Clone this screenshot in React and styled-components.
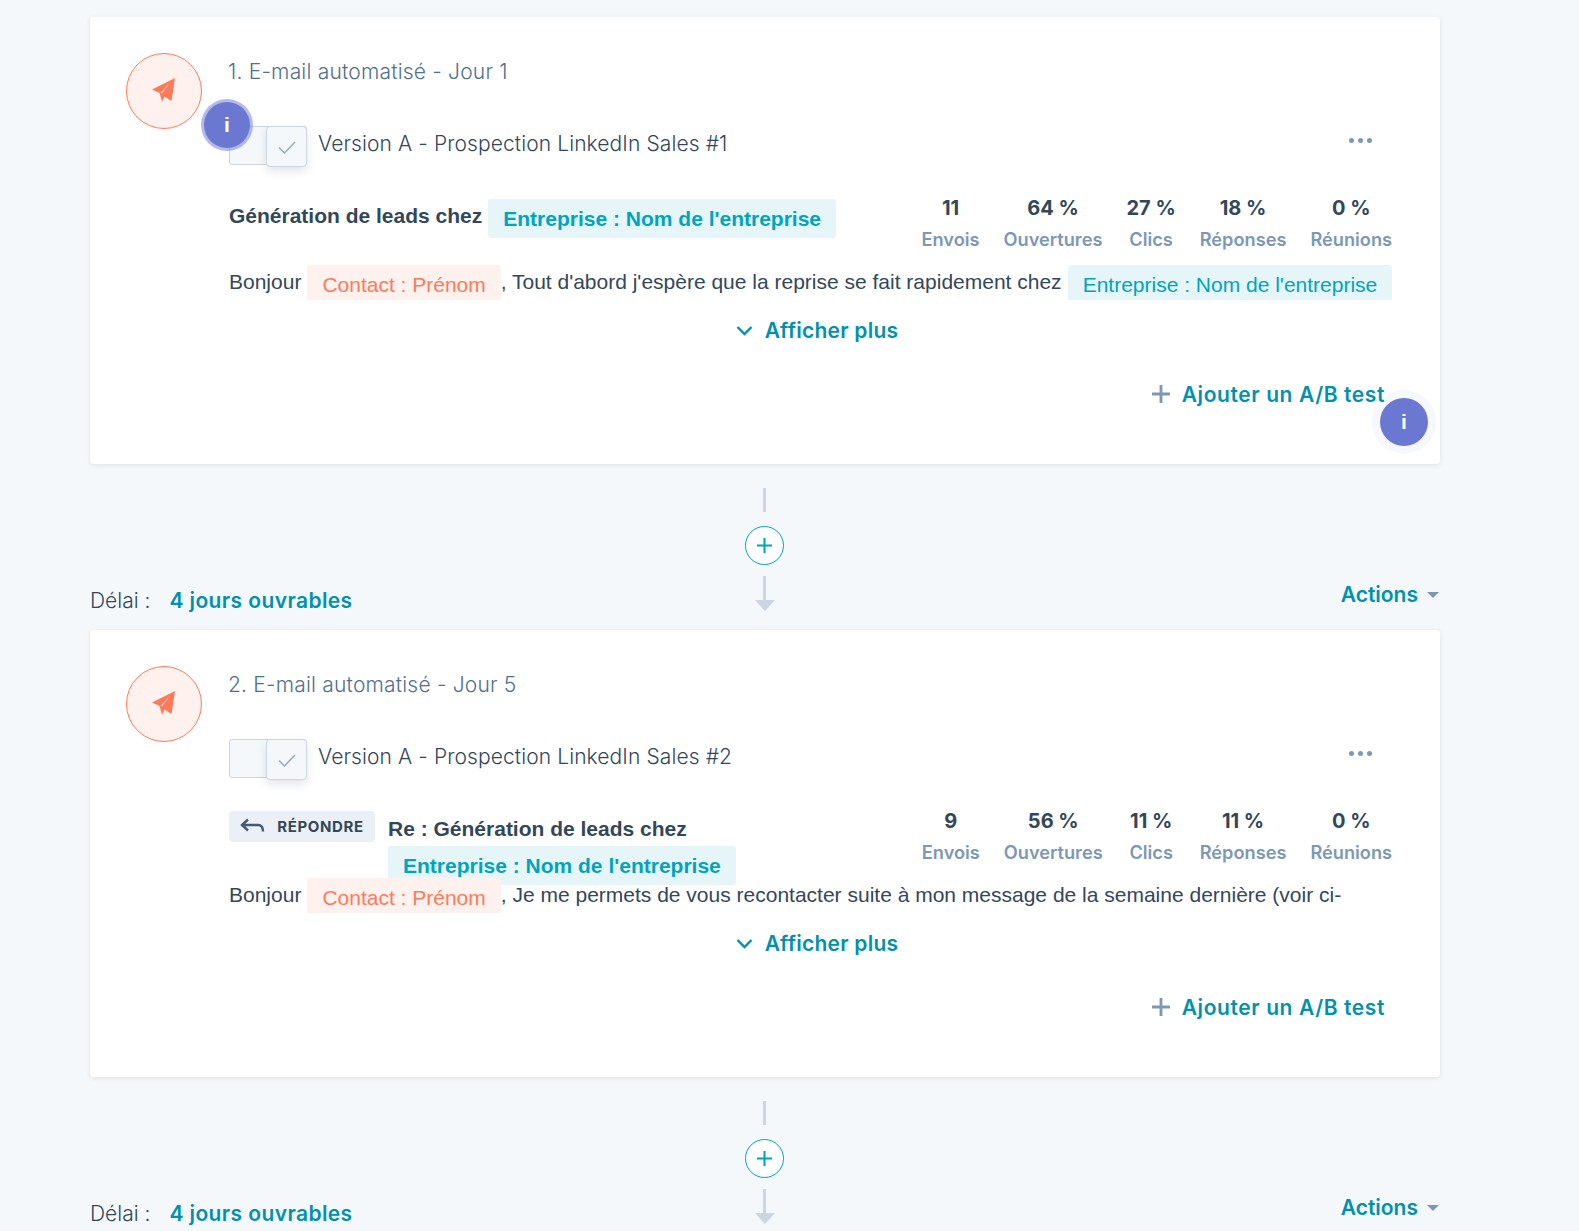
import React from 'react';
import styled, { createGlobalStyle } from 'styled-components';

const GlobalStyle = createGlobalStyle`
	html, body {
		margin: 0;
		padding: 0;
		background: #f5f8fa;
	}
	body {
		height: 1231px;
		overflow: hidden;
		font-family: 'Inter', 'Liberation Sans', sans-serif;
		color: #33475b;
	}
`;

const Page = styled.div`
	padding: 17px 139px 0 90px;
`;
const Card = styled.section`
	position: relative;
	height: 447px;
	box-sizing: border-box;
	padding: 36px 48px 0 36px;
	display: flex;
	gap: 27px;
	background: #fff;
	border-radius: 4px;
	box-shadow: 0 1px 5px rgba(45, 62, 80, 0.12);
`;
const IconCircle = styled.div`
	flex: none;
	width: 76px;
	height: 76px;
	box-sizing: border-box;
	padding-bottom: 3px;
	border: 1px solid #ff7a59;
	border-radius: 50%;
	background: #fff1ee;
	display: flex;
	align-items: center;
	justify-content: center;
`;
const Body = styled.div`
	flex: 1;
	min-width: 0;
`;
const StepTitle = styled.div`
	height: 36px;
	margin-left: -1px;
	padding-top: 1px;
	box-sizing: border-box;
	line-height: 36px;
	font-size: 21px;
	font-weight: 300;
	letter-spacing: 0.2px;
	color: #516f90;
`;
const VersionRow = styled.div`
	display: flex;
	align-items: center;
	margin-top: 36px;
	height: 41px;
`;
const Toggle = styled.div`
	position: relative;
	width: 78px;
	height: 39px;
	box-sizing: border-box;
	border: 1px solid #cbd6e2;
	border-radius: 3px;
	background: #f5f8fa;
	margin-right: 11px;
`;
const ToggleKnob = styled.div`
	position: absolute;
	top: -1px;
	right: -1px;
	width: 41px;
	height: 41px;
	box-sizing: border-box;
	padding-top: 2px;
	border: 1px solid #cbd6e2;
	border-radius: 4px;
	background: #f5f8fa;
	box-shadow: 0 4px 10px rgba(45, 62, 80, 0.14);
	display: flex;
	align-items: center;
	justify-content: center;
`;
const VersionName = styled.div`
	flex: 1;
	margin-bottom: 4px;
	font-size: 21px;
	font-weight: 300;
	letter-spacing: 0.1px;
	color: #33475b;
`;
const Dots = styled.div`
	display: flex;
	gap: 4px;
	margin: 0 20px 10px 0;
`;
const Dot = styled.span`
	width: 5px;
	height: 5px;
	border-radius: 50%;
	background: #7c98b6;
`;
const SubjectRow = styled.div`
	display: flex;
	justify-content: space-between;
	height: 66px;
	margin-top: 33px;
`;
const Subject = styled.div`
	display: flex;
	align-items: flex-start;
	font-family: 'Liberation Sans', sans-serif;
	font-size: 21px;
	font-weight: 700;
`;
const SubjectBody = styled.div`
	display: flex;
	flex-wrap: ${(p) => (p.$wrap ? 'wrap' : 'nowrap')};
	width: ${(p) => (p.$wrap ? '360px' : 'auto')};
	margin-top: ${(p) => (p.$wrap ? -1 : 0)}px;
`;
const SubjectText = styled.span`
	margin-right: 6px;
	line-height: ${(p) => (p.$wrap ? 35 : 34)}px;
	white-space: nowrap;
`;
const SubjectToken = styled.span`
	height: 39px;
	line-height: 40px;
	padding: 0 15px;
	border-radius: 3px;
	background: #e5f5f8;
	color: #00a4bd;
	white-space: nowrap;
`;
const ReplyTag = styled.div`
	flex: none;
	height: 31px;
	width: 146px;
	margin: -1px 13px 0 0;
	border-radius: 4px;
	background: #eaf0f6;
	display: flex;
	align-items: center;
	justify-content: center;
	gap: 12px;
	font-family: 'Inter', sans-serif;
	font-size: 15px;
	font-weight: 700;
	letter-spacing: 0.6px;
	color: #33475b;
`;
const Stats = styled.div`
	display: flex;
	gap: 24px;
	margin-top: -6px;
`;
const Stat = styled.div`
	min-width: 49px;
	text-align: center;
`;
const StatValue = styled.div`
	font-size: 20px;
	font-weight: 700;
	line-height: 30px;
`;
const StatLabel = styled.div`
	font-size: 18.2px;
	font-weight: 600;
	line-height: 32px;
	color: #7c98b6;
`;
const Message = styled.div`
	display: flex;
	align-items: flex-start;
	height: 36px;
	font-family: 'Liberation Sans', sans-serif;
	font-size: 21px;
	line-height: 34px;
	white-space: nowrap;
`;
const Token = styled.span`
	height: 35px;
	line-height: 40px;
	overflow: hidden;
	padding: 0 15px;
	margin: 0 0 0 6px;
	border-radius: 3px 3px 0 0;
	background: ${(p) => (p.$teal ? '#e5f5f8' : '#fff1ee')};
	color: ${(p) => (p.$teal ? '#00a4bd' : '#ff7a59')};
`;
const ShowMore = styled.div`
	display: flex;
	align-items: center;
	justify-content: center;
	gap: 12px;
	margin-top: 11px;
	padding-left: 13px;
	height: 36px;
	font-size: 21px;
	font-weight: 600;
	letter-spacing: 0.25px;
	color: #0091ae;
`;
const AddTest = styled.div`
	display: flex;
	align-items: center;
	justify-content: flex-end;
	gap: 12px;
	margin: 28px 7px 0 0;
	height: 36px;
	font-size: 21px;
	font-weight: 600;
	letter-spacing: 0.6px;
	color: #0091ae;
`;
const InfoBadge = styled.div`
	position: absolute;
	width: ${(p) => (p.$soft ? 48 : 46)}px;
	height: ${(p) => (p.$soft ? 48 : 46)}px;
	top: ${(p) => p.$top}px;
	left: ${(p) => p.$left}px;
	border-radius: 50%;
	background: #6a78d1;
	color: #fff;
	font-family: 'Liberation Sans', sans-serif;
	font-size: 21px;
	font-weight: 700;
	display: flex;
	align-items: center;
	justify-content: center;
	box-shadow: 0 0 0 ${(p) => (p.$soft ? '8px rgba(106, 120, 209, 0.05)' : '3px rgba(106, 120, 209, 0.5)')};
`;
const Between = styled.div`
	height: 166px;
	display: grid;
	grid-template-columns: 1fr auto 1fr;
	align-items: end;
`;
const Delay = styled.div`
	display: flex;
	align-items: center;
	gap: 19px;
	padding-bottom: 17px;
	font-size: 21px;
	font-weight: 300;
	color: #33475b;
`;
const DelayValue = styled.span`
	font-weight: 600;
	letter-spacing: 0.4px;
	color: #0091ae;
`;
const Connector = styled.div`
	display: flex;
	flex-direction: column;
	align-items: center;
	margin-right: 1px;
	padding-bottom: 19px;
`;
const Line = styled.div`
	width: 3px;
	height: ${(p) => p.$height}px;
	background: #cbd6e2;
`;
const AddStep = styled.div`
	width: 39px;
	height: 39px;
	box-sizing: border-box;
	margin: 14px 0 11px;
	border: 1px solid #00a4bd;
	border-radius: 50%;
	background: #fff;
	display: flex;
	align-items: center;
	justify-content: center;
`;
const ArrowHead = styled.div`
	width: 0;
	height: 0;
	border-left: 10px solid transparent;
	border-right: 10px solid transparent;
	border-top: 11px solid #cbd6e2;
`;
const Actions = styled.div`
	display: flex;
	align-items: center;
	justify-content: flex-end;
	gap: 9px;
	padding: 0 1px 23px 0;
	font-size: 21px;
	font-weight: 600;
	color: #0091ae;
`;
const Caret = styled.span`
	width: 0;
	height: 0;
	border-left: 6px solid transparent;
	border-right: 6px solid transparent;
	border-top: 6px solid #7c98b6;
`;

const Plane = () => (
	<svg width="26" height="26" viewBox="0 0 26 26">
		<path fill="#ff7a59" d="M24 1 20.5 24 13.6 19.6 11 25 8.6 16 1 12.6Z" />
		<path fill="#fff1ee" d="M19 6 10 15.6 10.6 16.4Z" />
	</svg>
);
const Check = () => (
	<svg width="18" height="13" viewBox="0 0 18 13" fill="none">
		<path stroke="#99acc2" strokeWidth="1.6" d="M1 6.5l5.5 5.5L17 1" />
	</svg>
);
const Chevron = () => (
	<svg width="17" height="11" viewBox="0 0 17 11" fill="none">
		<path stroke="#0091ae" strokeWidth="2.4" d="M1.5 2l7 7 7-7" />
	</svg>
);
const Plus = ({ size = 18, color = '#7c98b6', width = 3 }) => (
	<svg width={size} height={size} viewBox="0 0 19 19" fill="none">
		<path stroke={color} strokeWidth={width} d="M9.5 0v19M0 9.5h19" />
	</svg>
);
const ReplyArrow = () => (
	<svg width="25" height="17" viewBox="0 0 25 17" fill="none">
		<path stroke="#425b76" strokeWidth="2.4" d="M8 1.5 2 7l6 5.5M2 7h16c3.4 0 5 2.4 5 6.5" />
	</svg>
);

const stepsData = [
	{
		title: '1. E-mail automatisé - Jour 1',
		version: 'Version A - Prospection LinkedIn Sales #1',
		subject: 'Génération de leads chez',
		stats: ['11', '64 %', '27 %', '18 %', '0 %'],
		text: ", Tout d'abord j'espère que la reprise se fait rapidement chez",
	},
	{
		title: '2. E-mail automatisé - Jour 5',
		version: 'Version A - Prospection LinkedIn Sales #2',
		subject: 'Re : Génération de leads chez',
		reply: true,
		stats: ['9', '56 %', '11 %', '11 %', '0 %'],
		text: ', Je me permets de vous recontacter suite à mon message de la semaine dernière (voir ci-',
	},
];
const statLabels = ['Envois', 'Ouvertures', 'Clics', 'Réponses', 'Réunions'];

const Step = ({ step, badges }) => (
	<Card>
		<IconCircle>
			<Plane />
		</IconCircle>
		<Body>
			<StepTitle>{step.title}</StepTitle>
			<VersionRow>
				<Toggle>
					<ToggleKnob>
						<Check />
					</ToggleKnob>
				</Toggle>
				<VersionName>{step.version}</VersionName>
				<Dots>
					<Dot />
					<Dot />
					<Dot />
				</Dots>
			</VersionRow>
			<SubjectRow>
				<Subject>
					{step.reply && (
						<ReplyTag>
							<ReplyArrow />
							RÉPONDRE
						</ReplyTag>
					)}
					<SubjectBody $wrap={step.reply}>
						<SubjectText $wrap={step.reply}>{step.subject}</SubjectText>
						<SubjectToken>Entreprise : Nom de l'entreprise</SubjectToken>
					</SubjectBody>
				</Subject>
				<Stats>
					{step.stats.map((value, i) => (
						<Stat key={statLabels[i]}>
							<StatValue>{value}</StatValue>
							<StatLabel>{statLabels[i]}</StatLabel>
						</Stat>
					))}
				</Stats>
			</SubjectRow>
			<Message>
				Bonjour
				<Token>Contact : Prénom</Token>
				{step.text}
				{!step.reply && <Token $teal>Entreprise : Nom de l'entreprise</Token>}
			</Message>
			<ShowMore>
				<Chevron />
				Afficher plus
			</ShowMore>
			<AddTest>
				<Plus />
				Ajouter un A/B test
			</AddTest>
		</Body>
		{badges && (
			<>
				<InfoBadge $top={85} $left={114}>i</InfoBadge>
				<InfoBadge $soft $top={381} $left={1290}>i</InfoBadge>
			</>
		)}
	</Card>
);

const Gap = () => (
	<Between>
		<Delay>
			Délai :<DelayValue>4 jours ouvrables</DelayValue>
		</Delay>
		<Connector>
			<Line $height={24} />
			<AddStep>
				<Plus size={15} color="#00a4bd" width={2.6} />
			</AddStep>
			<Line $height={24} />
			<ArrowHead />
		</Connector>
		<Actions>
			Actions
			<Caret />
		</Actions>
	</Between>
);

const App = () => (
	<>
		<GlobalStyle />
		<Page>
			<Step step={stepsData[0]} badges />
			<Gap />
			<Step step={stepsData[1]} />
			<Gap />
		</Page>
	</>
);

export default App;
